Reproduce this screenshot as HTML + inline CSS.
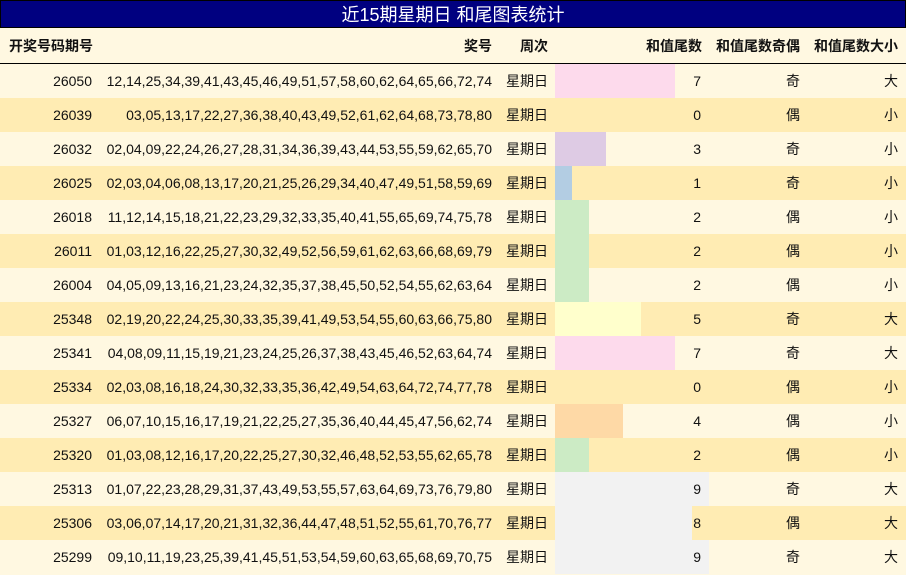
<!DOCTYPE html>
<html><head><meta charset="utf-8"><style>
*{margin:0;padding:0;box-sizing:border-box}
body{width:906px;height:575px;background:#fff8e1;font-family:"Liberation Sans","Noto Sans CJK SC",sans-serif;font-size:14px;color:#111;position:relative;overflow:hidden}
.title{position:absolute;left:0;top:0;width:906px;height:28px;background:#000080;border:1px solid #000;color:#fff;font-size:18px;text-align:center;line-height:28px}
.hdr{position:absolute;top:28px;left:0;width:906px;height:36px;border-bottom:1.5px solid #000;font-weight:bold}
.c{position:absolute;line-height:34px;white-space:nowrap}
.hdr .c{line-height:36px}
.row{position:absolute;left:0;width:906px;height:34px}
.bar{position:absolute;left:555px;top:0;height:34px}
</style></head><body>
<div class="title">近15期星期日 和尾图表统计</div>
<div class="hdr">
<div class="c" style="left:9px">开奖号码期号</div>
<div class="c" style="right:414px">奖号</div>
<div class="c" style="left:520px">周次</div>
<div class="c" style="right:204px">和值尾数</div>
<div class="c" style="right:106px">和值尾数奇偶</div>
<div class="c" style="right:8px">和值尾数大小</div>
</div>
<div id="rows"></div>
<script>
var d=[["26050","12,14,25,34,39,41,43,45,46,49,51,57,58,60,62,64,65,66,72,74",7,"奇","大"],
["26039","03,05,13,17,22,27,36,38,40,43,49,52,61,62,64,68,73,78,80",0,"偶","小"],
["26032","02,04,09,22,24,26,27,28,31,34,36,39,43,44,53,55,59,62,65,70",3,"奇","小"],
["26025","02,03,04,06,08,13,17,20,21,25,26,29,34,40,47,49,51,58,59,69",1,"奇","小"],
["26018","11,12,14,15,18,21,22,23,29,32,33,35,40,41,55,65,69,74,75,78",2,"偶","小"],
["26011","01,03,12,16,22,25,27,30,32,49,52,56,59,61,62,63,66,68,69,79",2,"偶","小"],
["26004","04,05,09,13,16,21,23,24,32,35,37,38,45,50,52,54,55,62,63,64",2,"偶","小"],
["25348","02,19,20,22,24,25,30,33,35,39,41,49,53,54,55,60,63,66,75,80",5,"奇","大"],
["25341","04,08,09,11,15,19,21,23,24,25,26,37,38,43,45,46,52,63,64,74",7,"奇","大"],
["25334","02,03,08,16,18,24,30,32,33,35,36,42,49,54,63,64,72,74,77,78",0,"偶","小"],
["25327","06,07,10,15,16,17,19,21,22,25,27,35,36,40,44,45,47,56,62,74",4,"偶","小"],
["25320","01,03,08,12,16,17,20,22,25,27,30,32,46,48,52,53,55,62,65,78",2,"偶","小"],
["25313","01,07,22,23,28,29,31,37,43,49,53,55,57,63,64,69,73,76,79,80",9,"奇","大"],
["25306","03,06,07,14,17,20,21,31,32,36,44,47,48,51,52,55,61,70,76,77",8,"偶","大"],
["25299","09,10,11,19,23,25,39,41,45,51,53,54,59,60,63,65,68,69,70,75",9,"奇","大"]];
var col={0:"",1:"#b3cde3",2:"#ccebc5",3:"#decbe4",4:"#fed9a6",5:"#ffffcc",6:"#e5d8bd",7:"#fddaec",8:"#f2f2f2",9:"#f2f2f2"};
var h="";
d.forEach(function(r,i){
h+='<div class="row" style="top:'+(64+i*34)+'px;background:'+(i%2?'#ffecb3':'#fff8e1')+'">'+
(r[2]?'<div class="bar" style="width:'+Math.round(r[2]*17.1)+'px;background:'+col[r[2]]+'"></div>':'')+
'<div class="c" style="right:814px">'+r[0]+'</div>'+
'<div class="c" style="right:414px">'+r[1]+'</div>'+
'<div class="c" style="left:506px">星期日</div>'+
'<div class="c" style="right:205px">'+r[2]+'</div>'+
'<div class="c" style="right:106px">'+r[3]+'</div>'+
'<div class="c" style="right:8px">'+r[4]+'</div></div>';});
document.getElementById("rows").innerHTML=h;
</script>
</body></html>
